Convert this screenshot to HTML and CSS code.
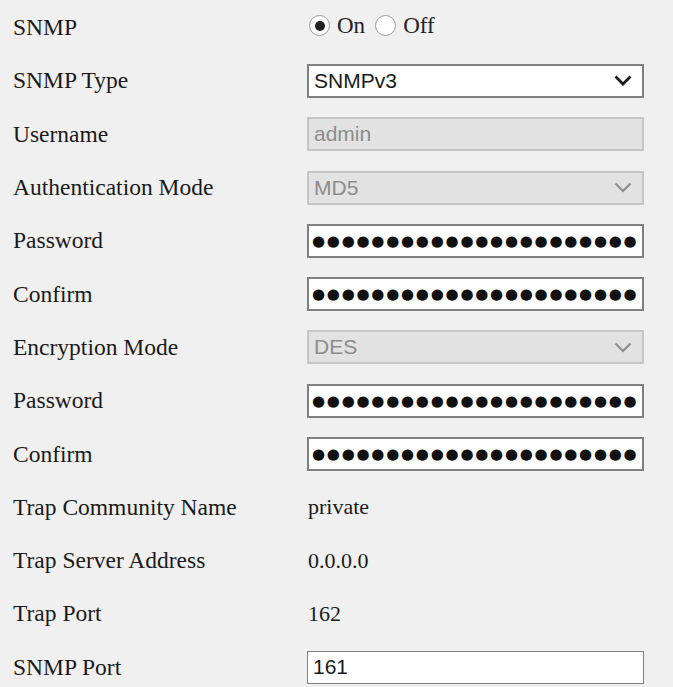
FILE: index.html
```html
<!DOCTYPE html>
<html lang="en">
<head>
  <meta charset="UTF-8" />
  <title>SNMP Settings</title>
  <link rel="stylesheet" href="styles.css">
</head>
<body>
  <div class="snmp-form">

    <div class="row">
      <div class="label">SNMP</div>
      <div class="field radios">
        <label class="radio"><span class="dot checked"></span>On</label>
        <label class="radio"><span class="dot"></span>Off</label>
      </div>
    </div>

    <div class="row">
      <div class="label">SNMP Type</div>
      <div class="field">
        <div class="box select">
          <span>SNMPv3</span>
          <svg class="chevron" width="18" height="11" viewBox="0 0 18 11"><path d="M1.5 1.5 L9 9 L16.5 1.5" fill="none" stroke="currentColor" stroke-width="2.8"/></svg>
        </div>
      </div>
    </div>

    <div class="row">
      <div class="label">Username</div>
      <div class="field"><div class="box disabled">admin</div></div>
    </div>

    <div class="row">
      <div class="label">Authentication Mode</div>
      <div class="field">
        <div class="box select disabled">
          <span>MD5</span>
          <svg class="chevron" width="18" height="11" viewBox="0 0 18 11"><path d="M1.5 1.5 L9 9 L16.5 1.5" fill="none" stroke="currentColor" stroke-width="2.2"/></svg>
        </div>
      </div>
    </div>

    <div class="row">
      <div class="label">Password</div>
      <div class="field"><div class="box secret">●●●●●●●●●●●●●●●●●●●●●●</div></div>
    </div>

    <div class="row">
      <div class="label">Confirm</div>
      <div class="field"><div class="box secret">●●●●●●●●●●●●●●●●●●●●●●</div></div>
    </div>

    <div class="row">
      <div class="label">Encryption Mode</div>
      <div class="field">
        <div class="box select disabled">
          <span>DES</span>
          <svg class="chevron" width="18" height="11" viewBox="0 0 18 11"><path d="M1.5 1.5 L9 9 L16.5 1.5" fill="none" stroke="currentColor" stroke-width="2.2"/></svg>
        </div>
      </div>
    </div>

    <div class="row">
      <div class="label">Password</div>
      <div class="field"><div class="box secret">●●●●●●●●●●●●●●●●●●●●●●</div></div>
    </div>

    <div class="row">
      <div class="label">Confirm</div>
      <div class="field"><div class="box secret">●●●●●●●●●●●●●●●●●●●●●●</div></div>
    </div>

    <div class="row">
      <div class="label">Trap Community Name</div>
      <div class="field value">private</div>
    </div>

    <div class="row">
      <div class="label">Trap Server Address</div>
      <div class="field value">0.0.0.0</div>
    </div>

    <div class="row">
      <div class="label">Trap Port</div>
      <div class="field value">162</div>
    </div>

    <div class="row">
      <div class="label">SNMP Port</div>
      <div class="field"><div class="box port">161</div></div>
    </div>

  </div>
</body>
</html>
```

FILE: styles.css
```css
body {
  margin: 0;
  background-color: #f0f0f0;
  font-family: 'Liberation Serif', 'Times New Roman', serif;
  color: #1a1a1a;
}

.snmp-form {
  padding-top: 1px;
}

.row {
  display: grid;
  grid-template-columns: 307px 337px;
  align-items: center;
  height: 53.3px;
}

.label {
  padding-left: 13px;
  font-size: 23.5px;
}

.value {
  font-size: 22px;
  padding-left: 1px;
}

.radios {
  display: flex;
  align-items: center;
  gap: 10px;
  padding-left: 2px;
  padding-bottom: 4px;
  font-size: 23px;
  color: #222;
}

.radio {
  display: flex;
  align-items: center;
  gap: 7px;
}

.dot {
  width: 21px;
  height: 21px;
  border: 1.5px solid #9a9a9a;
  border-radius: 50%;
  background-color: #fff;
  box-sizing: border-box;
  display: flex;
  align-items: center;
  justify-content: center;
}

.dot.checked::after {
  content: '';
  width: 10px;
  height: 10px;
  border-radius: 50%;
  background-color: #222;
}

.box {
  height: 34px;
  box-sizing: border-box;
  border: 2px solid #808080;
  background-color: #fff;
  font-family: 'Liberation Sans', Arial, sans-serif;
  font-size: 21px;
  color: #1a1a1a;
  display: flex;
  align-items: center;
  padding-left: 5px;
}

.select {
  justify-content: space-between;
  padding-right: 10px;
}

.chevron {
  color: #1a1a1a;
}

.disabled {
  background-color: #e2e2e2;
  border-color: #c6c6c6;
  color: #8c8c8c;
}

.disabled .chevron {
  color: #8c8c8c;
}

.secret {
  font-family: 'DejaVu Sans', sans-serif;
  font-size: 15px;
  letter-spacing: 1.75px;
  color: #111;
  overflow: hidden;
  white-space: nowrap;
  padding-left: 3px;
}

.port {
  height: 33px;
  border-width: 1.5px;
}
```
